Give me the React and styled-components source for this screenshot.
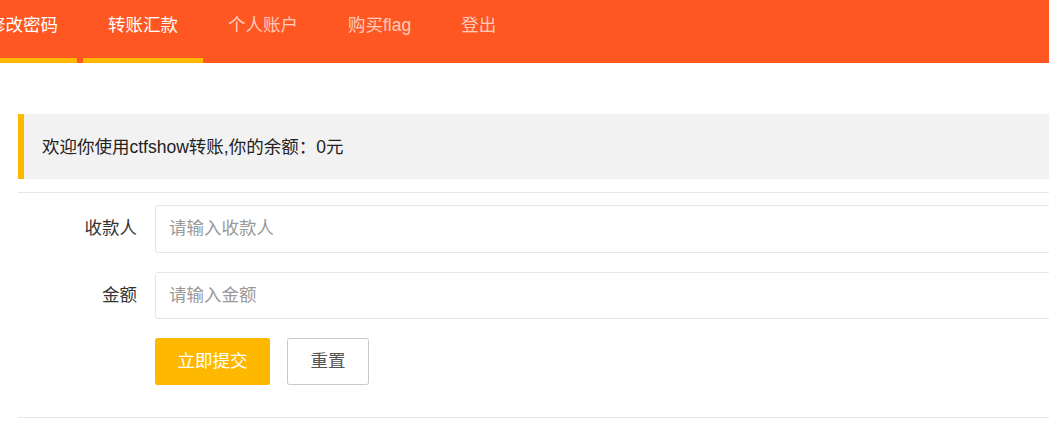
import React from "react";
import styled, { createGlobalStyle } from "styled-components";

const GlobalStyle = createGlobalStyle`
  html, body {
    margin: 0;
    padding: 0;
    background: #fff;
    overflow: hidden;
  }
  body {
    font-family: "Liberation Sans", Arial, "Noto Sans CJK SC", sans-serif;
    font-size: 17.5px;
    color: #333;
  }
  * {
    box-sizing: border-box;
  }
`;

const Header = styled.div`
  position: relative;
  height: 63px;
  background: #ff5722;
  overflow: hidden;
`;

const Nav = styled.ul`
  display: flex;
  margin: 0 0 0 -37px;
  padding: 0;
  list-style: none;
`;

const NavItem = styled.li`
  position: relative;
  height: 63px;
  padding: 0 25px;
  line-height: 50px;
  font-size: 17.5px;
  white-space: nowrap;
  color: ${(p) => (p.$bright ? "#fff" : "rgba(255, 255, 255, 0.7)")};

  &::after {
    content: "";
    display: ${(p) => (p.$active ? "block" : "none")};
    position: absolute;
    left: 0;
    right: 0;
    bottom: 0;
    height: 5px;
    background: #ffb800;
  }
`;

/* the sliding hover bar that layui leaves under a tab */
const HoverBar = styled.span`
  position: absolute;
  left: 0;
  bottom: 0;
  width: 77px;
  height: 5px;
  background: #ffb800;
`;

const Main = styled.div`
  width: 1200px;
  padding: 51px 0 0 18px;
`;

const Quote = styled.div`
  display: flex;
  align-items: center;
  height: 65px;
  padding: 0 0 3px 18px;
  border-left: 6px solid #ffb800;
  background: #f2f2f2;
  color: #222;
`;

const Rule = styled.div`
  height: 1px;
  background: #e6e6e6;
  margin: ${(p) => p.$top}px 0 0;
`;

const Form = styled.form`
  margin-top: 12px;
`;

const FormItem = styled.div`
  display: flex;
  margin-bottom: 19px;
`;

const Label = styled.label`
  width: 137px;
  padding-right: 18px;
  text-align: right;
  line-height: 47px;
  color: #333;
`;

const Input = styled.input`
  flex: 1;
  height: 47.5px;
  padding: 0 13px;
  border: 1px solid #e6e6e6;
  border-radius: 2.5px;
  font: inherit;
  font-size: 17.5px;
  color: #333;
  outline: none;

  &::placeholder {
    color: #999;
  }
`;

const Actions = styled.div`
  display: flex;
  gap: 17px;
  padding-left: 137px;
`;

const Button = styled.button`
  height: 47px;
  padding: 0 22.5px;
  border-radius: 2.5px;
  font: inherit;
  font-size: 17.5px;
  line-height: 45px;
  cursor: pointer;
  border: ${(p) => (p.$primary ? "none" : "1px solid #c9c9c9")};
  background: ${(p) => (p.$primary ? "#ffb800" : "#fff")};
  color: ${(p) => (p.$primary ? "#fff" : "#555")};
`;

const tabs = [
  { label: "修改密码", bright: true },
  { label: "转账汇款", bright: true, active: true },
  { label: "个人账户" },
  { label: "购买flag" },
  { label: "登出" },
];

export default function App() {
  return (
    <>
      <GlobalStyle />
      <Header>
        <Nav>
          {tabs.map((t) => (
            <NavItem key={t.label} $bright={t.bright} $active={t.active}>
              {t.label}
            </NavItem>
          ))}
        </Nav>
        <HoverBar />
      </Header>
      <Main>
        <Quote>欢迎你使用ctfshow转账,你的余额：0元</Quote>
        <Rule $top={13} />
        <Form onSubmit={(e) => e.preventDefault()}>
          <FormItem>
            <Label>收款人</Label>
            <Input placeholder="请输入收款人" />
          </FormItem>
          <FormItem>
            <Label>金额</Label>
            <Input placeholder="请输入金额" />
          </FormItem>
          <Actions>
            <Button type="submit" $primary>立即提交</Button>
            <Button type="reset">重置</Button>
          </Actions>
        </Form>
        <Rule $top={32} />
      </Main>
    </>
  );
}
